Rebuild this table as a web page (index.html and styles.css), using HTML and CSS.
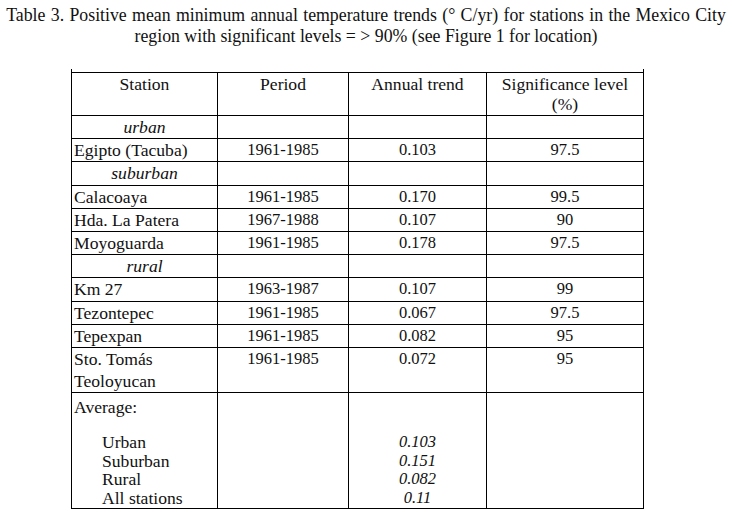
FILE: index.html
```html
<!DOCTYPE html>
<html>
<head>
<meta charset="utf-8">
<link rel="stylesheet" href="styles.css">
</head>
<body>
<p class="caption"><span class="wide">Table 3. Positive mean minimum annual temperature trends (° C/yr) for stations in the Mexico City</span><br>region with significant levels = &gt; 90% (see Figure 1 for location)</p>
<div class="wrap">
<div class="stub"></div>
<table class="data">
<colgroup><col class="c1"><col class="c2"><col class="c3"><col class="c4"></colgroup>
<tr class="head"><td class="ctr">Station</td><td class="ctr">Period</td><td class="ctr">Annual trend</td><td class="ctr">Significance level<br>(%)</td></tr>
<tr><td class="ctr it">urban</td><td></td><td></td><td></td></tr>
<tr><td>Egipto (Tacuba)</td><td class="ctr num">1961-1985</td><td class="ctr num">0.103</td><td class="ctr num">97.5</td></tr>
<tr><td class="ctr it">suburban</td><td></td><td></td><td></td></tr>
<tr><td>Calacoaya</td><td class="ctr num">1961-1985</td><td class="ctr num">0.170</td><td class="ctr num">99.5</td></tr>
<tr><td>Hda. La Patera</td><td class="ctr num">1967-1988</td><td class="ctr num">0.107</td><td class="ctr num">90</td></tr>
<tr><td>Moyoguarda</td><td class="ctr num">1961-1985</td><td class="ctr num">0.178</td><td class="ctr num">97.5</td></tr>
<tr><td class="ctr it">rural</td><td></td><td></td><td></td></tr>
<tr><td>Km 27</td><td class="ctr num">1963-1987</td><td class="ctr num">0.107</td><td class="ctr num">99</td></tr>
<tr><td>Tezontepec</td><td class="ctr num">1961-1985</td><td class="ctr num">0.067</td><td class="ctr num">97.5</td></tr>
<tr><td>Tepexpan</td><td class="ctr num">1961-1985</td><td class="ctr num">0.082</td><td class="ctr num">95</td></tr>
<tr class="two"><td>Sto. Tomás<br>Teoloyucan</td><td class="ctr num">1961-1985</td><td class="ctr num">0.072</td><td class="ctr num">95</td></tr>
<tr class="avg">
<td><div class="avg-title">Average:</div><div class="avg-list indent"><div>Urban</div><div>Suburban</div><div>Rural</div><div>All stations</div></div></td>
<td></td>
<td class="ctr it num"><div class="avg-title"></div><div class="avg-list"><div>0.103</div><div>0.151</div><div>0.082</div><div>0.11</div></div></td>
<td></td>
</tr>
</table>
</div>
</body>
</html>
```
FILE: styles.css
```css
html, body {
  margin: 0;
  padding: 0;
  background: #fff;
}
body {
  font-family: "Liberation Serif", "Times New Roman", serif;
  color: #111;
  width: 732px;
}
.caption {
  margin: 0;
  padding-top: 5px;
  text-align: center;
  font-size: 17.8px;
  line-height: 21px;
}
.wide { word-spacing: 0.9px; }
.wrap {
  padding: 22px 0 0 71px;
}
.stub {
  width: 573px;
  height: 3px;
  box-sizing: border-box;
  border-left: 1px solid #000;
  border-right: 1px solid #000;
}
.data {
  border-collapse: collapse;
  table-layout: fixed;
  width: 572px;
  font-size: 17.6px;
}
.c1 { width: 146px; }
.c2 { width: 131px; }
.c3 { width: 138px; }
.c4 { width: 157px; }
.data td {
  border: 1px solid #000;
  padding: 0 2px;
  height: 22.2px;
  line-height: 22px;
  vertical-align: top;
}
.data .head td {
  height: 41px;
  padding-top: 1px;
  line-height: 20px;
}
.data .two td {
  height: 44px;
  line-height: 22px;
}
.data .avg td { height: 113px; }
.ctr { text-align: center; }
.it { font-style: italic; }
.num { font-size: 16.5px; }
.avg-title {
  padding-top: 3px;
  height: 22px;
  line-height: 22px;
}
.avg-list {
  margin-top: 15px;
  line-height: 18.7px;
}
.indent { padding-left: 28px; }
```
